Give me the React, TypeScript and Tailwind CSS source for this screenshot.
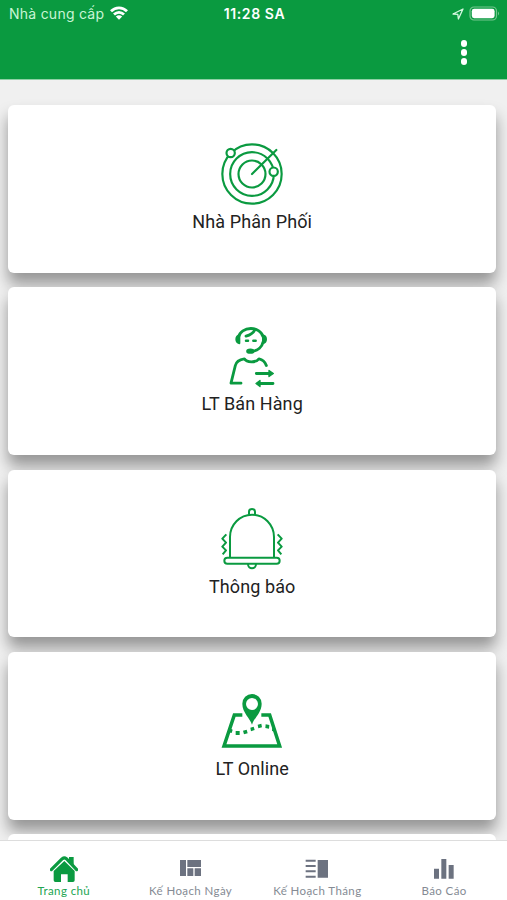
import React, { useState } from 'react'

const RadarIcon = () => (
  <svg viewBox="120 36 192 192" className="size-16" fill="none" stroke="#0a9a40" strokeWidth="6.5">
    <circle cx="216" cy="132" r="89" />
    <circle cx="216" cy="132" r="65.5" />
    <circle cx="216" cy="132" r="40.5" />
    <path d="M216 132L289 60" strokeLinecap="round" />
    <circle cx="152" cy="69" r="12.5" fill="#fff" />
    <circle cx="281" cy="125" r="12.5" fill="#fff" />
  </svg>
)

const AgentIcon = () => (
  <svg viewBox="120 28.5 192 192" className="size-16" fill="none" stroke="#0a9a40" strokeWidth="8.5" strokeLinecap="round" strokeLinejoin="round">
    <path d="M176 64A37 30 0 0 1 249 64" />
    <path d="M249 80C246 94 234 105 218 107" />
    <path d="M198 62C212 58 221 51 225 42" />
    <path d="M178 60C166 62 166 81 178 83ZM249 60C261 62 261 81 249 83Z" fill="#0a9a40" strokeWidth="6" />
    <path d="M198 76H204M220 76H227" strokeWidth="7.5" />
    <ellipse cx="211" cy="107" rx="10" ry="5.5" fill="#0a9a40" strokeWidth="5" />
    <path d="M183 203H153L166 150C169 137 180 132 193 130C200 142 229 142 237 130C248 132 255 139 259 150" />
    <path d="M229 174H268M279 204H240" />
    <path d="M267 165L280 174L267 183ZM240 195L228 204L240 213Z" fill="#0a9a40" strokeWidth="4" />
  </svg>
)

const BellIcon = () => (
  <svg viewBox="120 29 192 192" className="size-16" fill="none" stroke="#0a9a40" strokeWidth="6" strokeLinejoin="round">
    <path d="M150 180V119A66 67 0 0 1 282 119V180" />
    <path d="M207 52V43Q207 35 216 35Q225 35 225 43V52" />
    <rect x="133" y="181" width="166" height="18" rx="9" />
    <path d="M204 200C204 217 228 217 228 200" />
    <path d="M139 111L127 124L138 136L127 148L138 159L128 171M293 111L305 124L294 136L305 148L294 159L304 171" />
  </svg>
)

const MapIcon = () => (
  <svg viewBox="120 27 192 192" className="size-16" fill="#0a9a40">
    <path d="M187 105H163L132 198H299L269 105H244" fill="none" stroke="#0a9a40" strokeWidth="10.5" />
    <path d="M216 134C210 114 187 98 187 71A29 29 0 0 1 245 71C245 98 222 114 216 134ZM216 54A18 18 0 1 0 216 90A18 18 0 1 0 216 54Z" fillRule="evenodd" />
    <path d="M149 144L158 149L155 159L146 157ZM167 153H179V165H167ZM189 152L200 149L203 160L192 163ZM211 143L221 140L224 150L213 154ZM233 134L244 131L246 142L235 145ZM257 133L268 135L267 146L256 144ZM277 143L284 145L287 155L276 153Z" />
  </svg>
)

const HomeIcon = () => (
  <svg viewBox="150 136 84 84" className="size-7" fill="#0a9a40">
    <path d="M207 142H221V168L207 156Z" />
    <path d="M154 180L187 147Q193 142 199 147L230 180" fill="none" stroke="#0a9a40" strokeWidth="9.5" strokeLinecap="round" strokeLinejoin="round" />
    <path d="M161 184L193 154L224 184V212Q224 217 219 217H203V194H183V217H166Q161 217 161 212Z" />
  </svg>
)

const DayIcon = () => (
  <svg viewBox="534 136 84 84" className="size-7" fill="#6c7280">
    <path d="M543 151H561V199H543ZM565 151H606V172H565ZM565 176H583V199H565ZM587 176H606V199H587Z" />
  </svg>
)

const MonthIcon = () => (
  <svg viewBox="151 136 84 84" className="size-7" fill="#6c7280">
    <path d="M159 150H189V156H159ZM159 166H189V172H159ZM159 182H189V188H159ZM159 198H189V204H159ZM195 151H226V204H195Z" />
  </svg>
)

const ReportIcon = () => (
  <svg viewBox="531 136 84 84" className="size-7" fill="#6c7280">
    <path d="M543 177H558V207H543ZM565 148H580V207H565ZM587 166H602V207H587Z" />
  </svg>
)

const cards = [
  { label: 'Nhà Phân Phối', icon: <RadarIcon /> },
  { label: 'LT Bán Hàng', icon: <AgentIcon /> },
  { label: 'Thông báo', icon: <BellIcon /> },
  { label: 'LT Online', icon: <MapIcon /> },
]

const tabs = [
  { label: 'Trang chủ', icon: <HomeIcon /> },
  { label: 'Kế Hoạch Ngày', icon: <DayIcon /> },
  { label: 'Kế Hoạch Tháng', icon: <MonthIcon /> },
  { label: 'Báo Cáo', icon: <ReportIcon /> },
]

const App = () => {
  const [active, setActive] = useState(0)

  return (
    <div className="flex h-[900px] w-[507px] flex-col overflow-hidden bg-[#f0f0f0]">
      <header className="h-[79px] shrink-0 bg-[#0a9a40] text-white">
        <div className="grid h-7 grid-cols-3 items-center pr-[7px] pl-[9px] font-['Inter',sans-serif] text-[14px] leading-none">
          <div className="flex items-center gap-1.5">
            <span className="whitespace-nowrap tracking-[0.25px] text-[#c9f5d5]">Nhà cung cấp</span>
            <svg viewBox="0 0 18 14" className="mb-[3px] h-[14px] w-[18px]" fill="none" stroke="#fff" strokeWidth="2.8">
              <path d="M1 5.2C5.5 .7 12.5 .7 17 5.2M4 8.6C7 5.7 11 5.7 14 8.6" />
              <path d="M9 13.7L5.8 10.6Q9 7.8 12.2 10.6Z" fill="#fff" stroke="none" />
            </svg>
          </div>
          <span className="text-center font-semibold tracking-[0.6px]">11:28 SA</span>
          <div className="flex items-center justify-end gap-[5px]">
            <svg viewBox="0 0 12 12" className="size-3" fill="none" stroke="#d5f7df" strokeWidth="1.3" strokeLinejoin="round">
              <path d="M1 6L11 1L6.4 11L5.8 6.3Z" />
            </svg>
            <svg viewBox="0 0 31 15" className="mb-[2px] h-[15px] w-[31px]">
              <rect x="1" y="1" width="26.5" height="13" rx="4" fill="none" stroke="#74c68e" strokeWidth="1.2" />
              <rect x="2.8" y="2.8" width="22.8" height="9.4" rx="2.4" fill="#fff" />
              <path d="M29 5.5Q31 7.5 29 9.5Z" fill="#74c68e" />
            </svg>
          </div>
        </div>
        <button className="mt-3 ml-[460.5px] flex flex-col gap-[2.4px]">
          <span className="size-[6.8px] rounded-full bg-white" />
          <span className="size-[6.8px] rounded-full bg-white" />
          <span className="size-[6.8px] rounded-full bg-white" />
        </button>
      </header>

      <main className="flex min-h-0 flex-1 flex-col gap-[14.6px] overflow-hidden border-t border-[#8fd0a5] pt-[25px] pr-[11px] pl-[8.4px]">
        {cards.map((card) => (
          <div key={card.label} className="flex h-[167.7px] shrink-0 flex-col items-center rounded-md bg-white pt-[37.4px] shadow-[0_11px_15px_rgba(0,0,0,0.38)]">
            {card.icon}
            <span className="mt-[3.6px] font-['Roboto',sans-serif] text-[18px] leading-6 tracking-[0.1px] text-[#222]">{card.label}</span>
          </div>
        ))}
        <div className="h-[167.7px] shrink-0 rounded-md bg-white" />
      </main>

      <nav className="z-10 grid h-[60px] shrink-0 grid-cols-4 border-t border-[#ddd] bg-white">
        {tabs.map((tab, i) => (
          <button key={tab.label} onClick={() => setActive(i)} className="flex flex-col items-center pt-[14px] pl-px">
            {tab.icon}
            <span className={`whitespace-nowrap font-['Lato',sans-serif] text-[11.5px] leading-4 tracking-[0.4px] ${active === i ? 'text-[#21a552]' : 'text-[#858b94]'}`}>{tab.label}</span>
          </button>
        ))}
      </nav>
    </div>
  )
}

export default App
